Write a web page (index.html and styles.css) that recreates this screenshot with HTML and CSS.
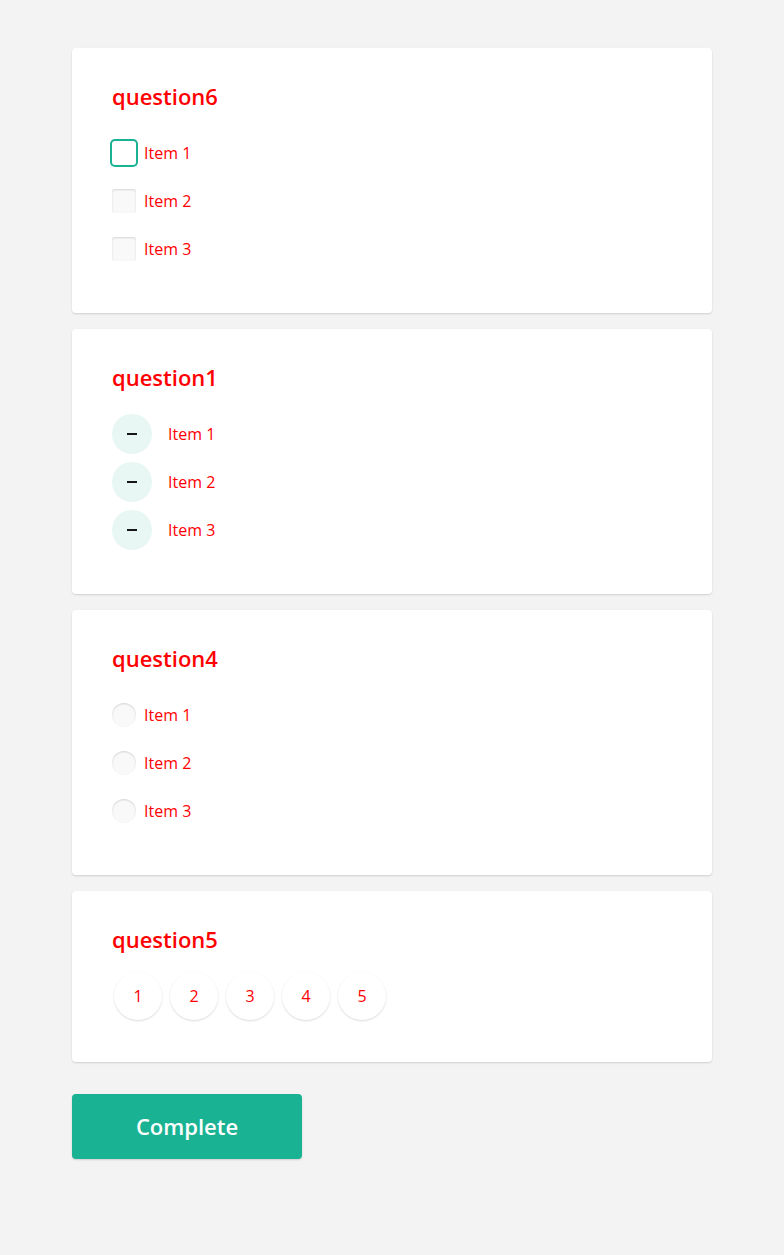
FILE: index.html
```html
<!DOCTYPE html>
<html>
<head>
<meta charset="utf-8">
<link rel="stylesheet" href="styles.css">
</head>
<body>
<div class="survey">
  <div class="card">
    <h3 class="title">question6</h3>
    <div class="items">
      <div class="row"><span class="box box-focus"></span><span class="label">Item 1</span></div>
      <div class="row"><span class="box"></span><span class="label">Item 2</span></div>
      <div class="row"><span class="box"></span><span class="label">Item 3</span></div>
    </div>
  </div>
  <div class="card">
    <h3 class="title">question1</h3>
    <div class="items">
      <div class="row rank"><span class="rank-icon"><span class="dash"></span></span><span class="label">Item 1</span></div>
      <div class="row rank"><span class="rank-icon"><span class="dash"></span></span><span class="label">Item 2</span></div>
      <div class="row rank"><span class="rank-icon"><span class="dash"></span></span><span class="label">Item 3</span></div>
    </div>
  </div>
  <div class="card">
    <h3 class="title">question4</h3>
    <div class="items">
      <div class="row"><span class="box radio"></span><span class="label">Item 1</span></div>
      <div class="row"><span class="box radio"></span><span class="label">Item 2</span></div>
      <div class="row"><span class="box radio"></span><span class="label">Item 3</span></div>
    </div>
  </div>
  <div class="card card-rating">
    <h3 class="title">question5</h3>
    <div class="rating">
      <span class="rate">1</span>
      <span class="rate">2</span>
      <span class="rate">3</span>
      <span class="rate">4</span>
      <span class="rate">5</span>
    </div>
  </div>
  <div class="actions">
    <button class="complete">Complete</button>
  </div>
</div>
</body>
</html>
```

FILE: styles.css
```css
* { box-sizing: border-box; }
html, body {
  margin: 0;
  padding: 0;
  background: #f3f3f3;
  font-family: "Open Sans", "Noto Sans", sans-serif;
}
.survey {
  width: 640px;
  margin: 0 auto;
  padding: 48px 0 40px;
  display: flex;
  flex-direction: column;
  gap: 16px;
}
.card {
  background: #fff;
  border-radius: 4px;
  box-shadow: 0 1px 2px rgba(0,0,0,0.15);
  padding: 34px 40px 40px;
}
.title {
  margin: 0;
  font-size: 22px;
  line-height: 28px;
  font-weight: 600;
  color: #f00;
}
.items {
  margin-top: 19px;
  display: flex;
  flex-direction: column;
}
.row {
  height: 48px;
  display: flex;
  align-items: center;
  gap: 8px;
}
.row.rank { gap: 16px; }
.label {
  font-size: 16px;
  line-height: 24px;
  color: #f00;
}
.box {
  width: 24px;
  height: 24px;
  border-radius: 3px;
  background: #f9f9f9;
  box-shadow: inset 0 1px 2px rgba(0,0,0,0.15);
  flex-shrink: 0;
}
.box-focus {
  background: #fff;
  box-shadow: 0 0 0 2px #19b394;
}
.radio { border-radius: 50%; }
.rank-icon {
  width: 40px;
  height: 40px;
  border-radius: 50%;
  background: #e8f7f4;
  display: flex;
  align-items: center;
  justify-content: center;
  flex-shrink: 0;
}
.dash {
  width: 10px;
  height: 2px;
  background: #161616;
}
.card-rating { padding-bottom: 42px; }
.rating {
  margin-top: 19px;
  display: flex;
  gap: 8px;
  padding-left: 2px;
}
.rate {
  width: 48px;
  height: 48px;
  border-radius: 50%;
  background: #fff;
  box-shadow: 0 1px 2px rgba(0,0,0,0.15);
  display: flex;
  align-items: center;
  justify-content: center;
  font-size: 16px;
  color: #f00;
}
.actions {
  padding-top: 16px;
}
.complete {
  width: 230px;
  height: 65px;
  padding: 0 0 2px;
  border: none;
  border-radius: 4px;
  background: #19b394;
  box-shadow: 0 1px 2px rgba(0,0,0,0.15);
  color: #fff;
  font-family: "Open Sans", "Noto Sans", sans-serif;
  font-size: 22px;
  font-weight: 600;
  cursor: pointer;
}
```
